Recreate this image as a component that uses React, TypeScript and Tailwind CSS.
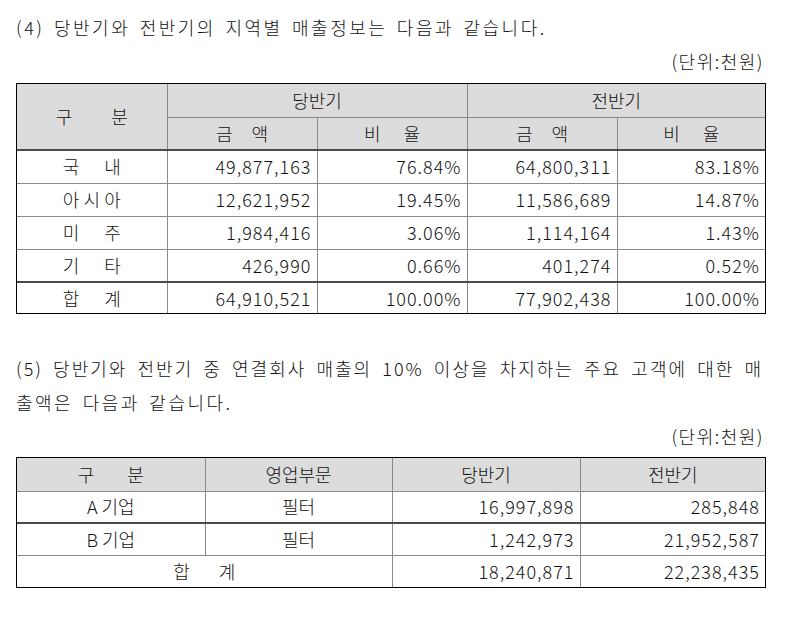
import React from "react";

const font = { fontFamily: '"Noto Sans CJK KR", "Noto Sans", sans-serif' };

type CellProps = {
  children?: React.ReactNode;
  className?: string;
  colSpan?: number;
  rowSpan?: number;
};

function Cell({ children, className = "", colSpan, rowSpan }: CellProps) {
  return (
    <td
      colSpan={colSpan}
      rowSpan={rowSpan}
      className={`border-[#8a8a8a] p-0 align-middle ${className}`}
    >
      {children}
    </td>
  );
}

// spreads two or three syllables over a fixed width, like "구    분"
function Spread({ text, w }: { text: string[]; w: string }) {
  return (
    <div className={`mx-auto flex justify-between ${w}`}>
      {text.map((t, i) => (
        <span key={i}>{t}</span>
      ))}
    </div>
  );
}

const regionRows = [
  { name: ["국", "내"], cur: "49,877,163", curPct: "76.84%", prev: "64,800,311", prevPct: "83.18%" },
  { name: ["아", "시", "아"], cur: "12,621,952", curPct: "19.45%", prev: "11,586,689", prevPct: "14.87%" },
  { name: ["미", "주"], cur: "1,984,416", curPct: "3.06%", prev: "1,114,164", prevPct: "1.43%" },
  { name: ["기", "타"], cur: "426,990", curPct: "0.66%", prev: "401,274", prevPct: "0.52%" },
];

const customerRows = [
  { name: "A 기업", dept: "필터", cur: "16,997,898", prev: "285,848" },
  { name: "B 기업", dept: "필터", cur: "1,242,973", prev: "21,952,587" },
];

function RegionTable() {
  const num = "text-right pr-[5px] tracking-[1px]";
  return (
    <div className="mt-[5px] border border-black">
      <table className="w-full table-fixed border-collapse text-[18px] text-[#111]">
        <colgroup>
          <col className="w-[150px]" />
          <col className="w-[150px]" />
          <col className="w-[150px]" />
          <col className="w-[150px]" />
          <col />
        </colgroup>
        <tbody>
          <tr className="h-[33px] bg-[#dcdcdc]">
            <Cell rowSpan={2} className="border-r border-b-2 border-b-[#4a4a4a] text-center">
              <Spread text={["구", "분"]} w="w-[72px]" />
            </Cell>
            <Cell colSpan={2} className="border-r border-b text-center">
              당반기
            </Cell>
            <Cell colSpan={2} className="border-b text-center">
              전반기
            </Cell>
          </tr>
          <tr className="h-[33px] bg-[#dcdcdc]">
            <Cell className="border-r border-b-2 border-b-[#4a4a4a]">
              <Spread text={["금", "액"]} w="w-[52px]" />
            </Cell>
            <Cell className="border-r border-b-2 border-b-[#4a4a4a]">
              <Spread text={["비", "율"]} w="w-[56px]" />
            </Cell>
            <Cell className="border-r border-b-2 border-b-[#4a4a4a]">
              <Spread text={["금", "액"]} w="w-[52px]" />
            </Cell>
            <Cell className="border-b-2 border-b-[#4a4a4a]">
              <Spread text={["비", "율"]} w="w-[56px]" />
            </Cell>
          </tr>
          {regionRows.map((r, i) => {
            const bottom =
              i === regionRows.length - 1 ? "border-b-2 border-b-[#4a4a4a]" : "border-b";
            return (
              <tr key={i} className="h-[33px]">
                <Cell className={`border-r ${bottom}`}>
                  <Spread text={r.name} w="w-[58px]" />
                </Cell>
                <Cell className={`border-r ${bottom} ${num}`}>{r.cur}</Cell>
                <Cell className={`border-r ${bottom} ${num}`}>{r.curPct}</Cell>
                <Cell className={`border-r ${bottom} ${num}`}>{r.prev}</Cell>
                <Cell className={`${bottom} ${num}`}>{r.prevPct}</Cell>
              </tr>
            );
          })}
          <tr className="h-[31px]">
            <Cell className="border-r">
              <Spread text={["합", "계"]} w="w-[58px]" />
            </Cell>
            <Cell className={`border-r ${num}`}>64,910,521</Cell>
            <Cell className={`border-r ${num}`}>100.00%</Cell>
            <Cell className={`border-r ${num}`}>77,902,438</Cell>
            <Cell className={num}>100.00%</Cell>
          </tr>
        </tbody>
      </table>
    </div>
  );
}

function CustomerTable() {
  const num = "text-right pr-[5px] tracking-[1px]";
  return (
    <div className="mt-[4px] border border-black">
      <table className="w-full table-fixed border-collapse text-[18px] text-[#111]">
        <colgroup>
          <col className="w-[188px]" />
          <col className="w-[187px]" />
          <col className="w-[188px]" />
          <col />
        </colgroup>
        <tbody>
          <tr className="h-[33px] bg-[#dcdcdc]">
            <Cell className="border-r border-b">
              <Spread text={["구", "분"]} w="w-[66px]" />
            </Cell>
            <Cell className="border-r border-b text-center">영업부문</Cell>
            <Cell className="border-r border-b text-center">당반기</Cell>
            <Cell className="border-b text-center">전반기</Cell>
          </tr>
          {customerRows.map((r, i) => {
            const bottom = i === 0 ? "border-b-2 border-b-[#4a4a4a]" : "border-b";
            return (
              <tr key={i} className="h-[32px]">
                <Cell className={`border-r ${bottom} text-center`}>{r.name}</Cell>
                <Cell className={`border-r ${bottom} text-center`}>{r.dept}</Cell>
                <Cell className={`border-r ${bottom} ${num}`}>{r.cur}</Cell>
                <Cell className={`${bottom} ${num}`}>{r.prev}</Cell>
              </tr>
            );
          })}
          <tr className="h-[32px]">
            <Cell colSpan={2} className="border-r">
              <Spread text={["합", "계"]} w="w-[62px]" />
            </Cell>
            <Cell className={`border-r ${num}`}>18,240,871</Cell>
            <Cell className={num}>22,238,435</Cell>
          </tr>
        </tbody>
      </table>
    </div>
  );
}

export default function App() {
  return (
    <div className="min-h-screen bg-white font-light text-[#111]" style={font}>
      <div className="w-[750px] ml-[16px] pt-[10px] text-[18px]">
        <p className="leading-[34px] tracking-[2.5px] [word-spacing:3px]">
          (4) 당반기와 전반기의 지역별 매출정보는 다음과 같습니다.
        </p>
        <p className="leading-[34px] text-right pr-[2px] tracking-[1.5px]">(단위:천원)</p>
        <RegionTable />

        <div className="mt-[37px] leading-[34px]">
          <p className="text-justify [text-align-last:justify] pr-[3px] tracking-[2px]">
            (5) 당반기와 전반기 중 연결회사 매출의 10% 이상을 차지하는 주요 고객에 대한 매
          </p>
          <p className="tracking-[2.5px] [word-spacing:3px]">출액은 다음과 같습니다.</p>
        </div>
        <p className="leading-[34px] text-right pr-[2px] tracking-[1.5px]">(단위:천원)</p>
        <CustomerTable />
      </div>
    </div>
  );
}
